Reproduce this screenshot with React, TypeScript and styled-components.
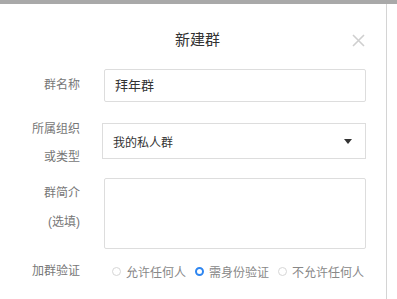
import React from "react";
import styled, { createGlobalStyle } from "styled-components";

const Global = createGlobalStyle`
  html, body { margin: 0; padding: 0; background: #fff; }
  body { font-family: "Liberation Sans", "Noto Sans CJK SC", sans-serif; }
  * { box-sizing: border-box; }
`;

const Page = styled.div`
  width: 397px;
  height: 299px;
  overflow: hidden;
  display: flex;
  flex-direction: column;
  background: #fff;
`;

const Overlay = styled.div`
  height: 4px;
  flex: none;
  background: #a9a9a9;
`;

const Stage = styled.div`
  flex: 1;
  display: flex;
`;

const Dialog = styled.div`
  width: 387px;
  flex: none;
  background: #fff;
  border-right: 1px solid #d4d4d4;
  display: flex;
  flex-direction: column;
  padding: 18px 20px 0 0;
`;

const Header = styled.div`
  position: relative;
  height: 36px;
  line-height: 36px;
  text-align: center;
  padding-left: 29px;
  font-size: 15px;
  color: #333;
`;

const Close = styled.button`
  position: absolute;
  right: 1px;
  top: 12px;
  width: 13px;
  height: 13px;
  padding: 0;
  border: none;
  background: none;
  display: block;
`;

const Row = styled.div<{ $top: number }>`
  display: flex;
  align-items: flex-start;
  margin-top: ${(p) => p.$top}px;
`;

const Label = styled.div<{ $lh: number; $offset: number; $pull?: number }>`
  width: 80px;
  flex: none;
  text-align: right;
  font-size: 12px;
  color: #777;
  line-height: ${(p) => p.$lh}px;
  margin-top: ${(p) => p.$offset}px;
  margin-bottom: ${(p) => -(p.$pull ?? 0)}px;
  margin-right: 24px;
`;

const Input = styled.div`
  flex: 1;
  height: 33px;
  border: 1px solid #ddd;
  border-radius: 2px;
  padding-left: 10px;
  font-size: 13px;
  line-height: 31px;
  color: #333;
`;

const Select = styled.div`
  flex: 1;
  margin-left: -2px;
  height: 36px;
  border: 1px solid #ddd;
  display: flex;
  align-items: center;
  justify-content: space-between;
  padding: 0 13px 0 10px;
  font-size: 12px;
  color: #333;
`;

const Arrow = styled.span`
  width: 0;
  height: 0;
  border-left: 4px solid transparent;
  border-right: 4px solid transparent;
  border-top: 5px solid #333;
`;

const TextArea = styled.div`
  flex: 1;
  height: 71px;
  border: 1px solid #ddd;
  border-radius: 2px;
`;

const Radios = styled.div`
  display: flex;
  align-items: center;
  padding-left: 8px;
  height: 20px;
  gap: 9px;
`;

const Option = styled.label`
  display: flex;
  align-items: center;
  gap: 5px;
  font-size: 12px;
  color: #888;
  white-space: nowrap;
`;

const Dot = styled.span<{ $on?: boolean }>`
  width: 9px;
  height: 9px;
  border-radius: 50%;
  flex: none;
  background: #fff;
  border: ${(p) => (p.$on ? "2.5px solid #2f86f0" : "1px solid #d6d6d6")};
`;

const Rest = styled.div`
  flex: 1;
  background: #fff;
`;

export default function App() {
  return (
    <Page>
      <Global />
      <Overlay />
      <Stage>
        <Dialog>
          <Header>
            新建群
            <Close aria-label="关闭">
              <svg width="13" height="13" viewBox="0 0 13 13">
                <path d="M1 1L12 12M12 1L1 12" stroke="#cfcfcf" strokeWidth="1.6" />
              </svg>
            </Close>
          </Header>
          <Row $top={11}>
            <Label $lh={33} $offset={0}>群名称</Label>
            <Input>拜年群</Input>
          </Row>
          <Row $top={21}>
            <Label $lh={28} $offset={-8} $pull={12}>
              所属组织
              <br />
              或类型
            </Label>
            <Select>
              我的私人群
              <Arrow />
            </Select>
          </Row>
          <Row $top={19}>
            <Label $lh={29} $offset={1}>
              群简介
              <br />
              (选填)
            </Label>
            <TextArea />
          </Row>
          <Row $top={12}>
            <Label $lh={20} $offset={0}>加群验证</Label>
            <Radios>
              <Option>
                <Dot />
                允许任何人
              </Option>
              <Option>
                <Dot $on />
                需身份验证
              </Option>
              <Option>
                <Dot />
                不允许任何人
              </Option>
            </Radios>
          </Row>
        </Dialog>
        <Rest />
      </Stage>
    </Page>
  );
}
